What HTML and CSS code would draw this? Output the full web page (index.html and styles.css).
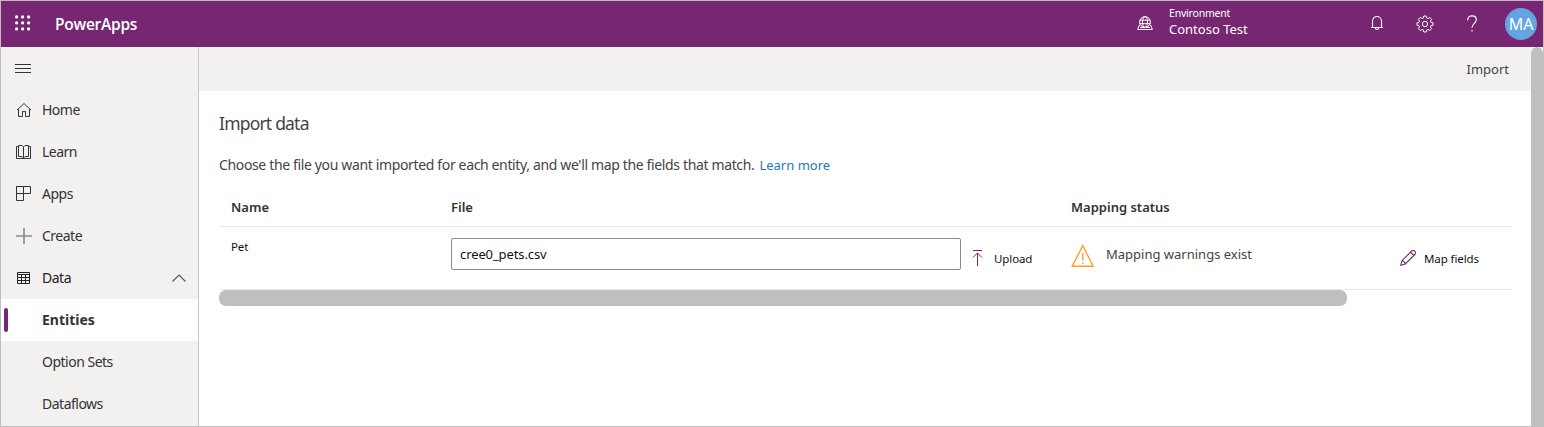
FILE: index.html
```html
<!DOCTYPE html>
<html lang="en">
<head>
<meta charset="utf-8">
<title>PowerApps</title>
<link rel="stylesheet" href="styles.css">
</head>
<body>
<div class="app">
  <header class="topbar">
    <svg class="waffle" width="16" height="16" viewBox="0 0 16 16" fill="#fff">
      <circle cx="1.6" cy="1.9" r="1.6"/><circle cx="7.6" cy="1.9" r="1.6"/><circle cx="13.6" cy="1.9" r="1.6"/>
      <circle cx="1.6" cy="7.9" r="1.6"/><circle cx="7.6" cy="7.9" r="1.6"/><circle cx="13.6" cy="7.9" r="1.6"/>
      <circle cx="1.6" cy="13.9" r="1.6"/><circle cx="7.6" cy="13.9" r="1.6"/><circle cx="13.6" cy="13.9" r="1.6"/>
    </svg>
    <span class="brand">PowerApps</span>
    <div class="environment">
      <svg class="env-icon" width="16" height="15" viewBox="0 0 16 15" fill="none" stroke="#fff">
        <circle cx="8" cy="6" r="5.4"/><ellipse cx="8" cy="6" rx="2.5" ry="5.4"/>
        <path d="M3 4.2h10M2.6 7.7h10.8M3 9.5H2L.7 13.5h14.600L14 9.500h-1M3 11.500h10"/>
      </svg>
      <div class="env-text"><span class="env-label">Environment</span><span class="env-name">Contoso Test</span></div>
    </div>
    <svg class="bell" width="14" height="16" viewBox="0 0 14 16" fill="none" stroke="#fff" stroke-width="1.1">
      <path d="M1 12.5h12M2.5 12.5V6a4.5 4.5 0 0 1 9 0v6.500M5.500 13a1.500 1.500 0 0 0 3 0"/>
    </svg>
    <svg class="gear" width="18" height="18" viewBox="0 0 18 18" fill="none" stroke="#fff" stroke-width="1">
      <path d="M7.800 1h2.400l.4 2 1.400.6 1.700-1.200 1.900 1.900L14.400 6l.6 1.400 2 .4v2.400l-2 .4-.6 1.400 1.200 1.700-1.900 1.900-1.700-1.200-1.400.6-.4 2H7.800l-.4-2-1.400-.6-1.700 1.200-1.900-1.900L3.600 12 3 10.600l-2-.4V7.800l2-.4L3.600 6 2.400 4.300l1.900-1.900L6 3.600 7.400 3z"/>
      <circle cx="9" cy="9" r="2.700"/>
    </svg>
    <svg class="help" width="10" height="17" viewBox="0 0 10 17" fill="none" stroke="#fff" stroke-width="1.150">
      <path d="M.7 5.300C.7 2.400 2.500.8 5 .8s4.300 1.600 4.300 3.900c0 3.400-4.300 4-4.300 8M5 15v1.500"/>
    </svg>
    <span class="avatar">MA</span>
  </header>
  <div class="body">
    <nav class="sidebar">
      <div class="menu">
        <svg width="16" height="10" viewBox="0 0 16 10" stroke="#333" fill="none"><path d="M0 .5h16M0 4.500h16M0 8.500h16"/></svg>
      </div>
      <a class="nav-item"><svg width="16" height="16" viewBox="0 0 16 16" fill="none" stroke="#333"><path d="M1 8.200 8 1.500l7 6.700M2.500 7v7.500h4V9.500h3v5h4V7"/></svg><span>Home</span></a>
      <a class="nav-item"><svg width="16" height="16" viewBox="0 0 16 16" fill="none" stroke="#333"><path d="M2.500 2.500H.5v12h14v-12h-2M2.500 1.500H6L7.500 3 9 1.500h3.500v11H9L7.500 14 6 12.500H2.500zM7.500 3v11"/></svg><span>Learn</span></a>
      <a class="nav-item"><svg width="16" height="16" viewBox="0 0 16 16" fill="none" stroke="#333"><path d="M.5.5h14v7H.5zM7.500.5v14H.5v-14"/></svg><span>Apps</span></a>
      <a class="nav-item"><svg width="16" height="16" viewBox="0 0 16 16" fill="none" stroke="#888" stroke-width="1.600"><path d="M0 8h16M8 0v16"/></svg><span>Create</span></a>
      <a class="nav-item data"><svg width="16" height="16" viewBox="0 0 16 16" fill="none" stroke="#222"><path d="M1.500 2.500h12v11h-12zM1.500 4.500h12M1.500 7.500h12M1.500 10.500h12M5.500 4.500v9M9.500 4.500v9"/></svg><span>Data</span>
        <svg class="chevron" width="14" height="8" viewBox="0 0 14 8" fill="none" stroke="#555" stroke-width="1.100"><path d="M.5 7.500 7 1l6.500 6.500"/></svg></a>
      <a class="nav-item child selected"><span>Entities</span></a>
      <a class="nav-item child"><span>Option Sets</span></a>
      <a class="nav-item child"><span>Dataflows</span></a>
    </nav>
    <main class="main">
      <div class="commandbar"><span>Import</span></div>
      <section class="content">
        <h1 class="title"><span>Import data</span></h1>
        <p class="intro"><span class="intro-text">Choose the file you want imported for each entity, and we'll map the fields that match.</span><a class="learn-more">Learn more</a></p>
        <div class="grid head">
          <span>Name</span><span>File</span><span>Mapping status</span>
        </div>
        <div class="grid row">
          <span class="pet">Pet</span>
          <div class="file">
            <div class="file-input"><span>cree0_pets.csv</span></div>
            <svg width="12" height="16" viewBox="0 0 12 16" fill="none" stroke="#742774"><path d="M1 .5h9M5.500 3v13M1 7.500 5.500 3 10 7.500"/></svg>
            <span>Upload</span>
          </div>
          <div class="status">
            <svg width="24" height="24" viewBox="0 0 24 24" fill="none" stroke="#ff9f2e" stroke-width="1.400"><path d="M11.800 1.500 22.100 22.300H1.200zM11.800 9v7.500M11.800 18.500V20"/></svg>
            <span class="warning">Mapping warnings exist</span>
          </div>
          <div class="map">
            <svg width="16" height="16" viewBox="0 0 16 16" fill="none" stroke="#742774" stroke-width="1.100"><path d="M.7 15.300 2 10.700 11.500 1.200a2.200 2.200 0 0 1 3.300 3.300L5.300 14zM10.500 2.200l3.300 3.300M2 10.700c1.500 0 3.300 1.800 3.300 3.300"/></svg>
            <span>Map fields</span>
          </div>
        </div>
        <div class="hscroll"></div>
      </section>
    </main>
    <div class="vscroll"></div>
  </div>
</div>
</body>
</html>
```
FILE: styles.css
```css
* { box-sizing: border-box; }
body { margin: 0; font-family: "Noto Sans", "Open Sans", sans-serif; font-size: 14px; color: #333; background: #fff; }
svg { display: block; flex: none; }
span, a { white-space: nowrap; }
.app { height: 427px; border: 1px solid #bfbfbf; display: flex; flex-direction: column; overflow: hidden; }
.topbar { height: 46px; flex: none; background: #772771; color: #fff; display: flex; align-items: center; padding: 0 6px 0 14px; }
.waffle { margin-right: 24px; margin-top: -2px; }
.brand { font-family: "Open Sans", sans-serif; font-size: 15.500px; font-weight: 600; line-height: 20px; letter-spacing: -0.25px; margin-top: -1px; }
.environment { display: flex; margin-left: auto; width: 233px; align-items: center; }
.env-icon { margin-right: 16px; margin-top: -1px; }
.env-text { display: flex; flex-direction: column; margin-top: -5px; }
.env-label { font-size: 10.500px; line-height: 15px; letter-spacing: -0.2px; }
.env-label { letter-spacing: -0.2px; }
.env-name { font-size: 13px; line-height: 17px; }
.bell { margin-right: 32px; margin-top: -2px; }
.gear { margin-right: 33px; margin-top: -1px; }
.help { margin-right: 28px; margin-top: -1px; }
.avatar { width: 32px; height: 32px; border-radius: 50%; background: #62a5e2; font-size: 16px; line-height: 32px; text-align: center; }
.body { display: flex; flex: 1; min-height: 0; }
.sidebar { width: 198px; flex: none; background: #f2f1f0; border-right: 1px solid #c6c6c6; }
.menu { height: 42px; display: flex; align-items: center; padding: 2px 0 0 14px; }
.nav-item { height: 42px; display: flex; align-items: center; padding: 0 12px 0 15px; gap: 10px; color: #333; }
.nav-item span { letter-spacing: -0.5px; padding-bottom: 2px; }
.nav-item.child { padding-left: 41px; }
.data { color: #222; }
.chevron { margin-left: auto; }
.selected { background: #fff; font-weight: 700; position: relative; }
.nav-item.selected span { letter-spacing: 0; }
.selected::before { content: ""; position: absolute; left: 3px; top: 9px; width: 4px; height: 24px; border-radius: 2px; background: #742774; }
.main { flex: 1; min-width: 0; }
.commandbar { height: 44px; background: #f2f1f0; display: flex; align-items: center; justify-content: flex-end; padding-right: 22px; font-size: 13px; color: #444; }
.content { padding: 20px 20px 0; }
.title { margin: 0; font-size: 17.500px; font-weight: 400; line-height: 24px; letter-spacing: -0.8px; color: #444; }
.intro { margin: 18px 0 0; line-height: 24px; display: flex; gap: 5px; color: #444; }
.intro-text { letter-spacing: -0.355px; }
.learn-more { color: #2578b5; font-size: 13px; }
.grid { display: grid; grid-template-columns: 220px 620px 329px 1fr; padding-left: 12px; border-bottom: 1px solid #eaeaea; }
.head { height: 50px; padding-top: 20px; line-height: 20px; font-size: 13px; font-weight: 600; }
.row { height: 63px; color: #111; font-size: 11.500px; letter-spacing: -0.1px; }
.pet { line-height: 20px; margin-top: 10px; }
.file { display: flex; margin-top: 11px; height: 40px; align-items: center; }
.file-input { width: 510px; height: 32px; align-self: flex-start; border: 1px solid #8a8a8a; border-radius: 2px; padding-left: 8px; line-height: 30px; font-size: 13px; }
.file svg { margin-left: 11px; margin-right: 10px; }
.status { display: flex; margin-top: 17px; height: 24px; gap: 11px; font-size: 13px; letter-spacing: 0; color: #444; }
.warning { line-height: 20px; }
.map { display: flex; height: 40px; margin-top: 11px; align-items: center; gap: 8px; }
.hscroll { width: 1128px; height: 16px; border-radius: 7px; background: #bfbfbf; }
.vscroll { width: 12px; background: #bfbfbf; border-radius: 7px 7px 0 0; }
```
